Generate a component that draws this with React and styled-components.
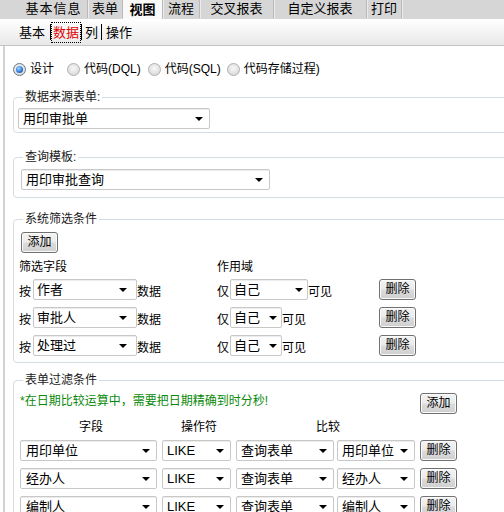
import { Fragment } from "react";
import styled, { createGlobalStyle } from "styled-components";

const GlobalStyle = createGlobalStyle`
  html, body {
    margin: 0;
    padding: 0;
    overflow: hidden;
    background: #fff;
  }
  body {
    font: 12px "Liberation Sans", "Noto Sans CJK SC", sans-serif;
    color: #000;
  }
`;

const FONT = `"Liberation Sans", "Noto Sans CJK SC", sans-serif`;

// Top tab strip ---------------------------------------------------------------

const TabBar = styled.div`
  display: flex;
  align-items: flex-start;
  height: 19px;
  padding-left: 20px;
  background: #d6d6d6;
`;

const Tab = styled.div`
  box-sizing: border-box;
  width: ${(p) => p.$w}px;
  height: ${(p) => (p.$active ? 19 : 18)}px;
  display: flex;
  align-items: center;
  justify-content: center;
  font-size: 13px;
  line-height: 16px;
  letter-spacing: ${(p) => p.$ls ?? 0}px;
  font-weight: ${(p) => (p.$active ? 700 : 400)};
  background: ${(p) => (p.$active ? "#f9f9f9" : "transparent")};
  border-right: 1px solid #b9b9b9;
  box-shadow: 1px 0 0 #ececec;
  white-space: nowrap;
`;

// Second level menu ------------------------------------------------------------

const SubBar = styled.div`
  display: flex;
  align-items: center;
  height: 26px;
  padding-left: 18px;
  background: linear-gradient(#ffffff, #e8e8e8);
  border-bottom: 1px solid #c4c4c4;
  font-size: 13px;
`;

const SubItem = styled.span`
  padding: 1px 1px;
  line-height: 17px;
  color: ${(p) => (p.$active ? "#e00000" : "#000")};
  outline: ${(p) => (p.$active ? "1px dotted #000" : "none")};
`;

const SubSep = styled.span`
  width: 1px;
  height: 16px;
  margin: 0 ${(p) => p.$r ?? 2}px 0 ${(p) => p.$l ?? 2}px;
  background: #000;
`;

// Content panel ------------------------------------------------------------------

const Panel = styled.div`
  margin-left: 3px;
  border-left: 2px solid #d2d2d2;
  padding: 15px 0 0 8px;
`;

const ModeRow = styled.div`
  display: flex;
  align-items: center;
  height: 16px;
`;

const Option = styled.label`
  display: flex;
  align-items: center;
  gap: 4px;
  margin-right: ${(p) => p.$space ?? 6}px;
  line-height: 16px;
  white-space: nowrap;
`;

const RadioDot = styled.span`
  box-sizing: border-box;
  width: 13px;
  height: 13px;
  border-radius: 50%;
  border: 1px solid ${(p) => (p.$on ? "#66788a" : "#b0b0b0")};
  background: radial-gradient(circle at 50% 40%, #f8f8f8, #d2d2d2);
  display: flex;
  align-items: center;
  justify-content: center;

  &::after {
    content: "";
    width: 7px;
    height: 7px;
    border-radius: 50%;
    background: ${(p) =>
      p.$on
        ? "radial-gradient(circle at 40% 35%, #a6d8ff, #2a73d6 60%, #0d3f8f)"
        : "transparent"};
  }
`;

const Group = styled.fieldset`
  box-sizing: border-box;
  width: 600px;
  margin: ${(p) => p.$mt}px 0 0 0;
  padding: 0 4px ${(p) => p.$pb}px;
  border: 1px solid #d3dde4;
  border-radius: 4px;
  min-width: 0;
`;

const Caption = styled.legend`
  margin-left: 5px;
  padding: 0 2px;
  font-size: 12px;
  line-height: 16px;
  color: #1a1a1a;
`;

const SelectBox = styled.div`
  position: relative;
  box-sizing: border-box;
  width: ${(p) => p.$w}px;
  height: 21px;
  margin: ${(p) => p.$mt ?? 0}px 0 0 ${(p) => p.$ml ?? 0}px;
  padding: 0 18px 0 ${(p) => p.$pl ?? 4}px;
  border: 1px solid #c8c8c8;
  border-radius: 2px;
  background: #fff;
  box-shadow: inset 0 1px 0 #ececec;
  font-family: ${FONT};
  font-size: 13px;
  line-height: 19px;
  white-space: nowrap;
  overflow: hidden;
  flex-shrink: 0;

  &::after {
    content: "";
    position: absolute;
    right: ${(p) => p.$ar ?? 6}px;
    top: 8px;
    border-left: 4px solid transparent;
    border-right: 4px solid transparent;
    border-top: 4px solid #000;
  }
`;

const Btn = styled.button`
  box-sizing: border-box;
  width: 37px;
  height: 21px;
  margin: ${(p) => p.$mt ?? 0}px 0 0 ${(p) => p.$ml ?? 0}px;
  padding: 0;
  border: 1px solid #707070;
  border-radius: 3px;
  background: linear-gradient(#f3f3f3 0%, #ebebeb 48%, #dcdcdc 52%, #cfcfcf 100%);
  box-shadow: inset 0 0 0 1px #fbfbfb;
  font: 12px ${FONT};
  line-height: 17px;
  color: #000;
  display: block;
`;

// System filter rows ---------------------------------------------------------------

const FilterGrid = styled.div`
  display: grid;
  grid-template-columns: 198px 162px 37px;
  margin-left: 1px;
`;

const HeadCell = styled.div`
  grid-column: ${(p) => p.$col ?? "auto"};
  line-height: 16px;
  margin-top: ${(p) => p.$mt ?? 0}px;
  text-align: ${(p) => p.$align ?? "left"};
`;

const RuleCell = styled.div`
  display: flex;
  align-items: flex-end;
  margin-top: ${(p) => p.$mt}px;
  line-height: 16px;
  white-space: nowrap;
`;

const Prefix = styled.span`
  margin-right: ${(p) => p.$gap}px;
`;

// Form filter table ------------------------------------------------------------------

const TableGrid = styled.div`
  display: grid;
  grid-template-columns: 142px 74px 101px 83px 37px;
  margin-left: 2px;
`;

const Hint = styled.div`
  grid-column: 1 / 5;
  align-self: center;
  color: #0a8a0a;
  line-height: 16px;
  white-space: nowrap;
`;

const TableCell = styled.div`
  margin-top: ${(p) => p.$mt}px;
`;

const tabs = [
  { label: "基本信息", w: 68, ls: 1 },
  { label: "表单", w: 35 },
  { label: "视图", w: 40, active: true },
  { label: "流程", w: 37 },
  { label: "交叉报表", w: 74 },
  { label: "自定义报表", w: 93 },
  { label: "打印", w: 35 },
];

const systemRules = [
  { field: "作者", scope: "自己", scopeW: 78 },
  { field: "审批人", scope: "自己", scopeW: 52 },
  { field: "处理过", scope: "自己", scopeW: 52 },
];

const formRules = [
  { field: "用印单位", target: "用印单位" },
  { field: "经办人", target: "经办人" },
  { field: "编制人", target: "编制人" },
];

export default function App() {
  return (
    <>
      <GlobalStyle />
      <TabBar>
        {tabs.map((t) => (
          <Tab key={t.label} $w={t.w} $ls={t.ls} $active={t.active}>
            {t.label}
          </Tab>
        ))}
      </TabBar>

      <SubBar>
        <SubItem>基本</SubItem>
        <SubSep $l={4} $r={1} />
        <SubItem $active>数据</SubItem>
        <SubSep $l={1} $r={2} />
        <SubItem>列</SubItem>
        <SubSep $l={2} $r={3} />
        <SubItem>操作</SubItem>
      </SubBar>

      <Panel>
        <ModeRow>
          <Option $space={13}>
            <RadioDot $on />
            设计
          </Option>
          <Option $space={7}>
            <RadioDot />
            代码(DQL)
          </Option>
          <Option $space={6}>
            <RadioDot />
            代码(SQL)
          </Option>
          <Option>
            <RadioDot />
            代码存储过程)
          </Option>
        </ModeRow>

        <Group $mt={12} $pb={3}>
          <Caption>数据来源表单:</Caption>
          <SelectBox $w={192} $mt={3}>用印审批单</SelectBox>
        </Group>

        <Group $mt={16} $pb={7}>
          <Caption>查询模板:</Caption>
          <SelectBox $w={249} $mt={4} $ml={3}>用印审批查询</SelectBox>
        </Group>

        <Group $mt={13} $pb={6}>
          <Caption>系统筛选条件</Caption>
          <Btn $mt={5} $ml={3}>添加</Btn>
          <FilterGrid>
            <HeadCell $mt={6}>筛选字段</HeadCell>
            <HeadCell $mt={6}>作用域</HeadCell>
            <div />
            {systemRules.map((r, i) => {
              const mt = i === 0 ? 4 : 7;
              return (
                <Fragment key={r.field}>
                  <RuleCell $mt={mt}>
                    <Prefix $gap={2}>按</Prefix>
                    <SelectBox $w={104} $pl={3} $ar={9}>{r.field}</SelectBox>
                    数据
                  </RuleCell>
                  <RuleCell $mt={mt}>
                    <Prefix $gap={1}>仅</Prefix>
                    <SelectBox $w={r.scopeW} $pl={3} $ar={4}>{r.scope}</SelectBox>
                    可见
                  </RuleCell>
                  <RuleCell $mt={mt}>
                    <Btn>删除</Btn>
                  </RuleCell>
                </Fragment>
              );
            })}
          </FilterGrid>
        </Group>

        <Group $mt={9} $pb={6}>
          <Caption>表单过滤条件</Caption>
          <TableGrid>
            <Hint>*在日期比较运算中，需要把日期精确到时分秒!</Hint>
            <Btn $mt={5}>添加</Btn>
            <HeadCell $mt={5} $align="center" $col="1">字段</HeadCell>
            <HeadCell $mt={5} $align="center">操作符</HeadCell>
            <HeadCell $mt={5} $align="center" $col="3 / 5">比较</HeadCell>
            <div />
            {formRules.map((r, i) => {
              const mt = i === 0 ? 5 : 7;
              return (
                <Fragment key={r.field}>
                  <TableCell $mt={mt}>
                    <SelectBox $w={137} $pl={5}>{r.field}</SelectBox>
                  </TableCell>
                  <TableCell $mt={mt}>
                    <SelectBox $w={69}>LIKE</SelectBox>
                  </TableCell>
                  <TableCell $mt={mt}>
                    <SelectBox $w={98}>查询表单</SelectBox>
                  </TableCell>
                  <TableCell $mt={mt}>
                    <SelectBox $w={78}>{r.target}</SelectBox>
                  </TableCell>
                  <TableCell $mt={mt}>
                    <Btn>删除</Btn>
                  </TableCell>
                </Fragment>
              );
            })}
          </TableGrid>
        </Group>
      </Panel>
    </>
  );
}
